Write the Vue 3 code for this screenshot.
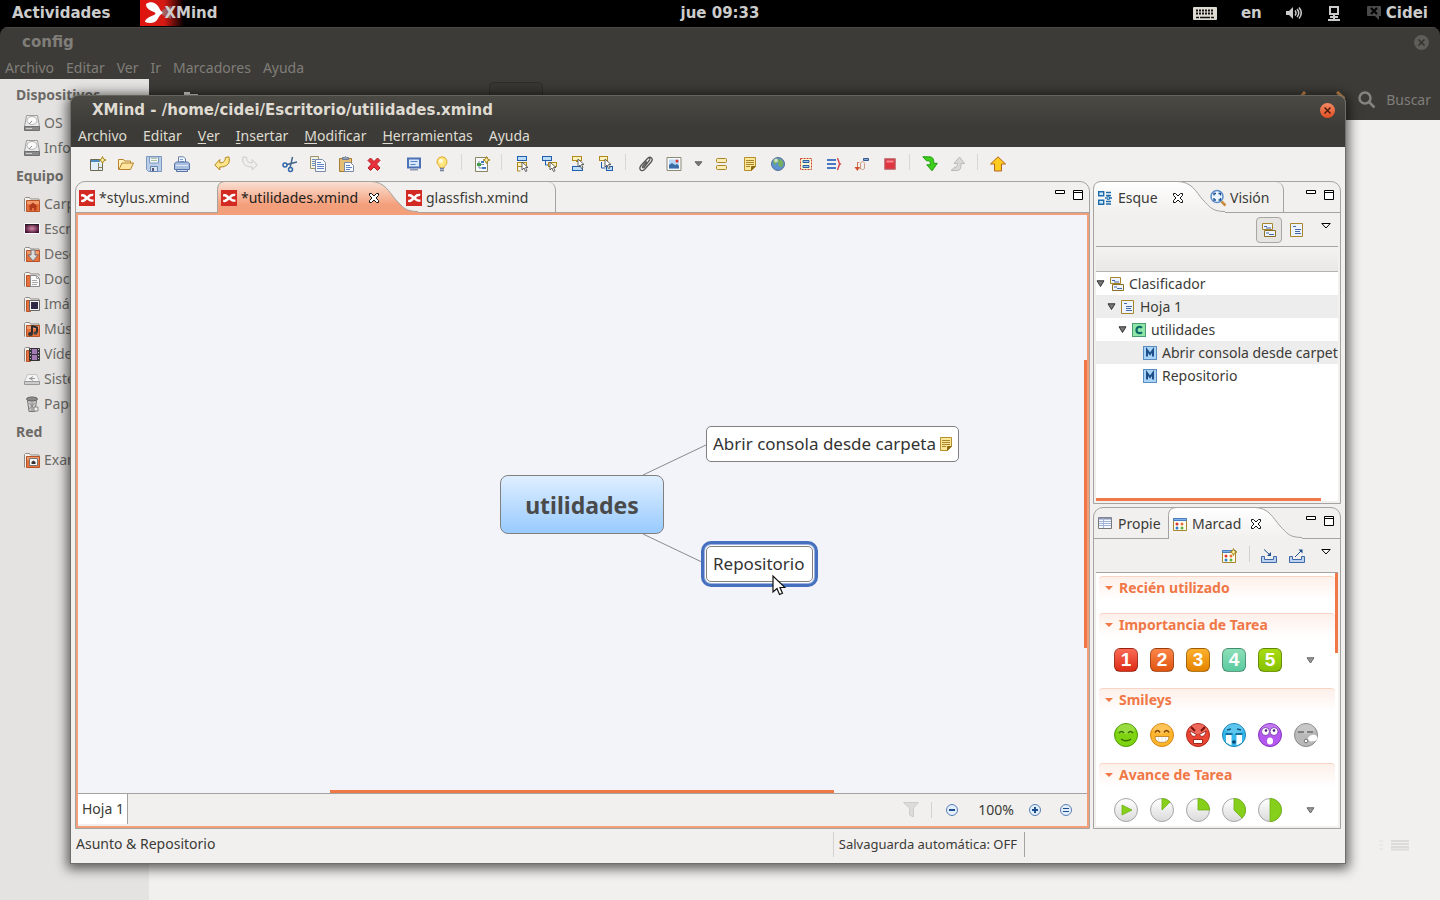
<script setup>
const fileMenus = ['Archivo', 'Editar', 'Ver', 'Ir', 'Marcadores', 'Ayuda']

const places = [
  { title: 'Dispositivos', items: [['disk', 'OS'], ['disk', 'Info']] },
  {
    title: 'Equipo',
    items: [
      ['home', 'Carpeta personal'],
      ['desk', 'Escritorio'],
      ['down', 'Descargas'],
      ['docs', 'Documentos'],
      ['pics', 'Imágenes'],
      ['music', 'Música'],
      ['video', 'Vídeos'],
      ['drive', 'Sistema de archivos'],
      ['trash', 'Papelera'],
    ],
  },
  { title: 'Red', items: [['net', 'Examinar la red']] },
]

const menus = [
  ['', 'Archivo'],
  ['', 'Editar'],
  ['V', 'er'],
  ['I', 'nsertar'],
  ['M', 'odificar'],
  ['H', 'erramientas'],
  ['', 'Ayuda'],
]

const tools = [
  ['fnew', 'fopen', 'save', 'print'],
  ['undo', 'redo'],
  ['cut', 'copy', 'paste', 'del'],
  ['present', 'bulb'],
  ['|', 'newsheet'],
  ['|', 'topic', 'subtopic', 'topicbefore', 'parent'],
  ['|', 'clip', 'image', 'v', 'label', 'note', 'globe', 'boundary', 'summary', 'relation', 'stop'],
  ['|', 'drill', 'drillup'],
  ['|', 'upload'],
]

const folder =
  '<path d="M.5 15.500V2.500l1-1h4l1 1.500h8.500v2" fill="#f4f2ef" stroke="#8f8b86"/><path d="M2.500 4.500h13v11h-13z" fill="#e8703a" stroke="#b5532b"/><path d="M3 5h12v3H3z" fill="#f39a6c"/>'
const folder2 =
  '<path d="M.5 15.500V2.500l1-1h4l1 1.500h8.500v2" fill="#f4f2ef" stroke="#8f8b86"/><path d="M2.500 4.500h4v11h-4z" fill="#e8703a" stroke="#b5532b"/>'
const sheetLines = '<path d="M4 4.500h3M6 7.500h6M6 9.500h5M6 11.500h6" stroke="#4468a8"/>'
const spark = '<path d="M12.500.5l1 2.500 2.500 1-2.500 1-1 2.500-1-2.500-2.500-1 2.500-1z" fill="#fff3a8" stroke="#a8861c"/>'
const pointer = '<path d="M8 6v8l2-2 1.500 3.500 1.500-.7-1.500-3.300h2.500z" fill="#fff" stroke="#555" stroke-width=".9"/>'
const blueBox = (x, y, w = 9) =>
  `<rect x="${x + 0.5}" y="${y + 0.5}" width="${w}" height="4" fill="#bcdcf8" stroke="#1f5fae"/>`
const goldBox = (x, y, w = 9) =>
  `<rect x="${x + 0.5}" y="${y + 0.5}" width="${w}" height="4" fill="#fdf3bd" stroke="#b08a1e"/>`

const icons = {
  disk: '<path d="M2.500.5h11l2 11H.5z" fill="#eceaea" stroke="#9d9d9d"/><ellipse cx="8" cy="5.500" rx="5" ry="4" fill="#fafafa" stroke="#b5b5b5"/><path d="M5 9l3-3" stroke="#8a8a8a"/><path d="M.5 11.500h15v4H.5z" fill="#8a8a8a" stroke="#6f6f6f"/><path d="M2 13.500h6" stroke="#ccc"/>',
  home: folder + '<path d="M4.500 10.500L9 6.500l4.500 4H12.500v4h-2.500v-2.500H8v2.500H5.500v-4z" fill="#b03a1a"/>',
  desk: '<defs><radialGradient id="dk"><stop offset="0" stop-color="#d58aa6"/><stop offset="1" stop-color="#4a1436"/></radialGradient></defs><path d="M.5 2.500h15v10H.5z" fill="url(#dk)" stroke="#fff"/><path d="M1 3.500h14" stroke="#222"/>',
  down: folder + '<path d="M7 4h4v5h3l-5 6-5-6h3z" fill="#ddd" stroke="#777"/>',
  docs: folder2 + '<path d="M6.500 4.500h6l3 3v8h-9z" fill="#fafafa" stroke="#8a8a8a"/><path d="M8 9.500h5M8 11.500h6M8 13.500h5M12.500 4.500v3h3" stroke="#aaa" fill="none"/>',
  pics: folder2 + '<path d="M5.500 4.500h10v10h-10z" fill="#f6f6f6" stroke="#666"/><path d="M7 6h7v7H7z" fill="#2e2a45"/>',
  music: folder + '<path d="M8 4.500v8M8 5l5 1.500v5" stroke="#2d2d2d" stroke-width="2" fill="none"/><ellipse cx="6.500" cy="13" rx="2.500" ry="2" fill="#333"/><ellipse cx="11.500" cy="12" rx="2" ry="1.800" fill="#444"/>',
  video: folder2 + '<path d="M5.500 2.500h10v12h-10z" fill="#3a3340" stroke="#333"/><path d="M8 3h5v5H8zM8 9h5v5H8z" fill="#a27ab4"/><path d="M6.500 3v12M14.500 3v12" stroke="#bbb" stroke-dasharray="1 2"/>',
  drive: '<path d="M3.500 3.500h9l3 7H.5z" fill="#f4f4f4" stroke="#c4c4c4"/><path d="M5 7.500h6M9 5.500l-3 2 3 2" stroke="#999" fill="none"/><path d="M.5 10.500h15v3H.5z" fill="#ccc" stroke="#999"/>',
  trash: '<path d="M3.500 4.500h9l-1.500 11h-6z" fill="#c9c9c9" stroke="#777"/><ellipse cx="8" cy="3" rx="5.500" ry="2" fill="#8a8a8a" stroke="#666"/><path d="M5.500 7l5 6M10.500 7l-5 6M8 6v9" stroke="#8a8a8a"/><path d="M10 11h4v4h-4z" fill="#eee" stroke="#888"/>',
  net: folder + '<path d="M5.500 6.500h8v7h-8z" fill="#f6f6f6" stroke="#777"/><path d="M7.500 12v-2l2-1.500 2 1.500v2z" fill="#333"/>',
  xm: '<rect width="16" height="16" fill="#d22a22"/><path d="M2 4.500c2.500-1 4.500 0 6 2 2-2.500 4-3 6.500-2.500l-.5 2c-2 0-3 .8-4 2 1.500 1.300 3 1.800 4.500 1.500v2.300c-2.500.3-4.500-.5-6.500-2.300-2 2.300-3.500 3-6 2.500l.3-2.200c1.700 0 2.700-.7 3.700-1.800C5 6.700 3.500 6.200 2 6.500z" fill="#fff"/>',
  fnew: '<path d="M.5 3.500h12v11H.5z" fill="#e3f0fb" stroke="#6d6a50"/><path d="M1 4h9v2H1z" fill="#4b8cc4"/><path d="M8.500 7v7M8.500 11.500h4" stroke="#8a8560"/>' + spark,
  fopen: '<path d="M.5 13.500v-10h5l1 1.500h6v2" fill="#fff0bd" stroke="#b8812c"/><path d="M1 13.500l3-6.500h11.500l-3 6.500z" fill="#ffe6a0" stroke="#b8812c"/>',
  save: '<path d="M.5.5h15v15H2.500l-2-2z" fill="#b9cde6" stroke="#7c98c2"/><path d="M3.500 1h9v6h-9z" fill="#f3f7fc" stroke="#7c98c2"/><path d="M5 2.500h6M5 4.500h6" stroke="#aac49a"/><path d="M4.500 10.500h7v5h-7z" fill="#d9e4f2" stroke="#6685b3"/><path d="M6 12h2v3H6z" fill="#557"/>',
  print: '<path d="M4.500 7V.8h5l2 2V7" fill="#f5f9fe" stroke="#6a7fa6"/><path d="M6 3.500h3M6 5.500h4" stroke="#6fa0d8"/><path d="M.5 7.500l2-1.500h11l2 1.500v6H.5z" fill="#a9bfe0" stroke="#5874a6"/><path d="M2 9.500h12" stroke="#dfe8f5"/><path d="M2.500 13.500h11v2h-11z" fill="#cddbf0" stroke="#5874a6"/>',
  undo: '<path d="M.8 9l5-5.500v3.300c4 .2 5.500-1.800 5.500-5.300l3.500-.7c2 6-1.500 10.400-9 10.200v3z" fill="#ffe68a" stroke="#b0851e"/>',
  redo: '<path d="M15.200 9l-5-5.500v3.300c-4 .2-5.500-1.800-5.500-5.300L1.200.8c-2 6 1.500 10.400 9 10.200v3z" fill="#efeeec" stroke="#cdcbc8"/>',
  cut: '<path d="M5 8.500L15 6M8 12L10.500 1" stroke="#44678e" stroke-width="1.500"/><circle cx="3" cy="9" r="2" fill="none" stroke="#2f67aa" stroke-width="1.500"/><circle cx="8.500" cy="13.500" r="2" fill="none" stroke="#2f67aa" stroke-width="1.500"/>',
  copy: '<path d="M.5.5h8v12h-8z" fill="#f4f1de" stroke="#9a9270"/><path d="M2 3.500h3M2 5.500h3M2 7.500h3M2 9.500h3" stroke="#6b8fc9"/><path d="M5.500 3.500h7l3 3v9h-10z" fill="#fbfcff" stroke="#7d8aa5"/><path d="M7 6.500h4M7 8.500h7M7 10.500h7M7 12.500h7" stroke="#5d84c5"/>',
  paste: '<path d="M1.500 2.500h12v13h-12z" fill="#e4be73" stroke="#a67d35"/><path d="M4.500 3.500v-2h2l1-1 1 1h2v2z" fill="#9aa4b5" stroke="#6b7a92"/><path d="M6.500 6.500h6l3 3v6h-9z" fill="#f8fbff" stroke="#7d8aa5"/><path d="M8 9.500h4M8 11.500h6M8 13.500h4" stroke="#5d84c5"/>',
  del: '<path d="M2 4.500L4.500 2l3.500 3.500L11.500 2 14 4.500 10.500 8l3.500 4-2.500 2.500L8 11l-3.500 3.500L2 12l3.500-4z" fill="#e8303a" stroke="#b5202a"/>',
  present: '<path d="M2 2.500h12v9H2z" fill="#d8e9fb" stroke="#4c72b5" stroke-width="2"/><path d="M4.500 5.500h7M4.500 8.500h5" stroke="#5d84c5"/><path d="M4 13h8v1.500H4z" fill="#8e98b0"/>',
  bulb: '<path d="M8 .8a5 5 0 0 1 3 9c-.8.800-1 1.200-1 2.200H6c0-1-.2-1.400-1-2.200a5 5 0 0 1 3-9z" fill="#ffe680" stroke="#e0a92a"/><circle cx="7" cy="5" r="2" fill="#fffbe0"/><path d="M6 12.500h4M6 14.500h4" stroke="#6f7f9f" stroke-width="1.500"/>',
  newsheet: '<path d="M1.500 1.500h12v14h-12z" fill="#f4faff" stroke="#8a8560"/><path d="M5 5v7h5M5 8.500h5" stroke="#7d8aa5" fill="none"/><path d="M3 7h4v3H3z" fill="#43a047"/><path d="M8 11h4v2H8zM7 5h3v2H7z" fill="#3f78c0"/>' + spark,
  topic: blueBox(3, 0) + goldBox(3, 6, 9) + '<path d="M3.500 11v4h3" stroke="#b08a1e" fill="none"/>' + pointer,
  subtopic: blueBox(0, 0) + '<path d="M3.500 5v4h3" stroke="#1f5fae" fill="none"/>' + goldBox(6, 6, 8) + pointer,
  topicbefore: goldBox(2, 0) + blueBox(2, 10, 10) + '<path d="M6 5.500h4v4" stroke="#b08a1e" fill="none"/><path d="M8 3v8l2-2 1.500 3.500 1.500-.7-1.500-3.300h2.500z" fill="#fff" stroke="#555" stroke-width=".9"/>',
  parent: goldBox(1, 0, 8) + '<path d="M3.500 6v6h4" stroke="#1f5fae" fill="none"/>' + blueBox(8, 10, 6) + '<path d="M7 3v8l2-2 1.500 3.500 1.500-.7-1.500-3.300h2.500z" fill="#fff" stroke="#555" stroke-width=".9"/>',
  clip: '<path d="M3.500 9l6-6.500c1-1.300 3-.3 2.200 1.300L6 11.500c-.8.700-2 0-1.300-1l4-5M3.500 9c-3.500 4-.5 7.500 3 4.500l7-8c2-3-1-5.500-3.500-3.500" fill="none" stroke="#555" stroke-width="1.300"/>',
  image: '<path d="M1 1.500h14v13H1z" fill="#fafafa" stroke="#8a8a7a"/><path d="M3 3.500h10v9H3z" fill="#b9d8f6"/><path d="M3 12.500V9l3-2 3 2 2-1 2 2v2.500z" fill="#3b6da8"/><circle cx="11" cy="5" r="1.500" fill="#d33"/>',
  label: '<rect x="2.500" y="2.500" width="10" height="4" rx="1" fill="#fbeeb5" stroke="#a8842a"/><rect x="2.500" y="9.500" width="10" height="4" rx="1" fill="#fbeeb5" stroke="#a8842a"/>',
  note: '<path d="M2.500 1.500h11v9l-4 4h-7z" fill="#fbe79a" stroke="#b5902a"/><path d="M4 4.500h8M4 6.500h8M4 8.500h8M4 10.500h4" stroke="#a8842a"/><path d="M9.500 14.500v-4h4" fill="#8f6a12" stroke="#8f6a12"/>',
  globe: '<circle cx="8" cy="8" r="6.500" fill="#5d92cf" stroke="#5a6f96"/><path d="M3 5c2-3 5-3 5-1s-1 2-2 4-2 1-3-3zM9 3c3 0 5 3 4 6-1 2-3 3-4 1s-2-5 0-7z" fill="#76ad5e"/><circle cx="6" cy="4.500" r="2" fill="#fff" opacity=".6"/>',
  boundary: '<path d="M2.500 2.500h11v11h-11z" fill="#fcf5cf" stroke="#c8402e" stroke-dasharray="2 1"/><path d="M5 4.500h6v2H5zM5 9.500h6v2H5z" fill="#9cc3ef" stroke="#2c5f9e"/>',
  summary: '<path d="M1 4h9M1 8h9M1 12h9" stroke="#4778c4" stroke-width="2"/><path d="M11 2.500c2 0 1 4.500 3 5.500-2 1-1 5.500-3 5.500" stroke="#d2434b" fill="none" stroke-width="1.500"/>',
  relation: '<path d="M3.500 12V6.500h2M7 12c-1 2-2 0-2-1M6.500 12.500V8c0-3 4-3 4-.5V12c0 2-4 2-4 0" stroke="#cf9a84" fill="none"/><path d="M3.500 6v6" stroke="#c9714f"/><path d="M.5 11l2.800 4 2.700-4z" fill="#d0512d"/><path d="M9.500 2.500h5v2h-5z" fill="#7fa6d6" stroke="#35598f"/>',
  stop: '<path d="M3 3h10v10H3z" fill="#e23340" stroke="#c05058" stroke-width="1.500"/><path d="M4.500 4.500h7v2h-7z" fill="#f48a92"/>',
  drill: '<path d="M.8.800h6c4 0 5 2 5 6.500h3.500L10 14.800 4.800 8.800h3.500c0-3.500-.5-4-3-4H4.500z" fill="#3ecf1c" stroke="#1f9a10"/>',
  drillup: '<path d="M1 14.500h5.500c4 0 4.500-2 4.500-7h3.500L9.500 1 4 7.500h3.500c0 3-.5 3.500-2.500 3.500z" fill="#d9d8d5" stroke="#bab9b5"/>',
  upload: '<path d="M8 .8L15.500 8h-4v7h-7V8h-4z" fill="#ffcb1f" stroke="#b5651c"/>',
  outline: '<path d="M.7 1.700h5v4h-5zM.7 10.200h5v4h-5z" fill="#cfeafc" stroke="#1d6bab" stroke-width="1.400"/><path d="M8 2.500h5M8 5.500h5M7 8h1.500M12 8h2M8 11.500h5M8 14h5" stroke="#1d6bab" stroke-width="1.300"/><path d="M9 6.800h2.500v2.500H9z" fill="#cfeafc" stroke="#1d6bab"/>',
  lens: '<circle cx="7" cy="6.500" r="6" fill="#eaf5ff" stroke="#5b8cc8" stroke-width="1.500"/><path d="M4 5.500v-2h2M8.500 3.500h2v2M10.500 8v2h-2M6 10H4V8" fill="none" stroke="#1d4f8f" stroke-width="1.300"/><path d="M11.500 11.500l4 4" stroke="#c98a3a" stroke-width="2.500"/>',
  sheets: '<path d="M1.500 1.500h10v6h-10z" fill="#eef4ff" stroke="#a8842a"/><path d="M3 4.500h3M5 6h5" stroke="#4468a8"/><path d="M3.500 8.500h11v6h-11z" fill="#eef4ff" stroke="#8a7020"/><path d="M5 11h3M8 12.500h5" stroke="#4468a8"/>',
  sheet: '<path d="M1.500 1.500h12v13h-12z" fill="#eef4ff" stroke="#a8842a"/>' + sheetLines,
  cent: '<rect x="1.500" y="1.500" width="13" height="13" fill="#8fe6a6" stroke="#4a9a72"/><path d="M11 5.800C9 4 5.500 4.600 5.500 8s3.500 4 5.500 2.200" fill="none" stroke="#0c6a6a" stroke-width="2.200"/>',
  main: '<rect x="1.500" y="1.500" width="13" height="13" fill="#a8d3f7" stroke="#5a8cc0"/><path d="M5 11.500V5l3 4 3-4v6.500" fill="none" stroke="#1d4f8a" stroke-width="2"/>',
  table: '<path d="M.5 1.500h13v11H.5z" fill="#f4f8ff" stroke="#777"/><path d="M.5 2.500h13" stroke="#8a94b5" stroke-width="2"/><path d="M1 5.500h12M1 7.500h12M1 9.500h12M5.500 2v10" stroke="#a3b3d6"/>',
  mark: '<path d="M1.500 2.500h13v12h-13z" fill="#fffdf2" stroke="#a8842a"/><path d="M1.500 2.500h13v2h-13z" fill="#7db3ea" stroke="#4c7cc0"/><circle cx="5" cy="8" r="1.500" fill="#d33"/><circle cx="10" cy="8" r="1.500" fill="#e8703a"/><circle cx="5" cy="12" r="1.500" fill="#2a7fd0"/><circle cx="10" cy="12" r="1.500" fill="#5db53a"/>',
  imp: '<path d="M.5 8.500h3v3h9v-3h3v6H.5z" fill="#bcd2ee" stroke="#3f68a8"/><path d="M3 1.500l5.500 5" stroke="#1d4f8f"/><path d="M10 8V4L6 8z" fill="#1d4f8f"/>',
  exp: '<path d="M.5 8.500h3v3h9v-3h3v6H.5z" fill="#bcd2ee" stroke="#3f68a8"/><path d="M6 9l6-6" stroke="#1d4f8f"/><path d="M9.500 1.500h4v4z" fill="#1d4f8f"/>',
  minus: '<circle cx="8" cy="8" r="5.500" fill="#e2eefb" stroke="#5a7fb5"/><path d="M5 8h6" stroke="#1d4f8f" stroke-width="2"/>',
  plus: '<circle cx="8" cy="8" r="5.500" fill="#e2eefb" stroke="#5a7fb5"/><path d="M5 8h6M8 5v6" stroke="#1d4f8f" stroke-width="2"/>',
  fit: '<circle cx="8" cy="8" r="5.500" fill="#e2eefb" stroke="#5a7fb5"/><path d="M5 6.500h6M5 9.500h6" stroke="#1d4f8f"/>',
  funnel: '<path d="M.5.5h15L10.500 6v9l-4-2V6z" fill="#dddbd8" stroke="#cfcdca"/>',
  close: '<path d="M3.500 3.500h2L8 6l2.500-2.500h2v2L10 8l2.500 2.500v2h-2L8 10l-2.500 2.500h-2v-2L6 8 3.500 5.500z" fill="#fff" stroke="#111"/>',
}
icons.newmark = icons.mark + spark

const tree = [
  { depth: 0, icon: 'sheets', text: 'Clasificador', open: true },
  { depth: 1, icon: 'sheet', text: 'Hoja 1', open: true },
  { depth: 2, icon: 'cent', text: 'utilidades', open: true },
  { depth: 3, icon: 'main', text: 'Abrir consola desde carpeta' },
  { depth: 3, icon: 'main', text: 'Repositorio' },
]

const priorities = ['red', 'orange', 'amber', 'teal', 'green']

const smileys = [
  ['#7fd411', '#4f9a08', '<path d="M5 10q2.500-3 5 0M14 10q2.500-3 5 0" stroke="#386b06" stroke-width="1.500" fill="none"/><path d="M7 16q5 3.500 10 0" stroke="#386b06" stroke-width="1.500" fill="none"/>'],
  ['#fdb52c', '#d68414', '<path d="M5 9.500q2.500-4 5 0M14 9.500q2.500-4 5 0" stroke="#8a4a06" stroke-width="1.500" fill="none"/><path d="M5 13.500h14q0 6-7 6t-7-6z" fill="#fff" stroke="#b5781c" stroke-width=".8"/><path d="M8.500 14v4.500M12 14v5.500M15.500 14v4.500" stroke="#ddd" stroke-width=".8"/>'],
  ['#ea4433', '#b02a1c', '<path d="M5 4l4 4M19 4l-4 4" stroke="#7a1008" stroke-width="2"/><path d="M4 8l6.500 3.500C9 14.500 5 14 4 8zM20 8l-6.500 3.500C15 14.500 19 14 20 8z" fill="#fff" stroke="#7a1008" stroke-width=".7"/><path d="M7.500 16.500h9v4h-9z" fill="#fff" stroke="#a02a1c"/>'],
  ['#35b8ec', '#1c85b8', '<path d="M4 12h5.500v10.500L4 19.500zM14.500 12H20v7.500l-5.500 3z" fill="#fff"/><path d="M3.500 11h7M13.500 11h7M5 7l4-1M19 7l-4-1" stroke="#0a5a85" stroke-width="1.500"/><ellipse cx="12" cy="19" rx="2" ry="1.800" fill="#0a4a75"/>'],
  ['#b458f0', '#8434bd', '<circle cx="7.500" cy="8.500" r="4" fill="#fff" stroke="#6f2aa5" stroke-width=".8"/><circle cx="16" cy="8.500" r="4" fill="#fff" stroke="#6f2aa5" stroke-width=".8"/><circle cx="8" cy="7.500" r="1.300" fill="#4a1a7a"/><circle cx="16" cy="7.500" r="1.300" fill="#4a1a7a"/><ellipse cx="12" cy="18" rx="3" ry="3.500" fill="#fff"/>'],
  ['#b9b9b9', '#8a8a8a', '<path d="M4 9h6M13 9h6" stroke="#6a6a6a" stroke-width="1.600"/><path d="M14 15c2-4 9-4 9-1 1 2-1 5-4 4-2 1-5 0-5-3z" fill="#fff"/><circle cx="12" cy="18" r="1.800" fill="#fff" stroke="#777"/>'],
]

const progress = [
  'M8 7v10l10-5z',
  'M12 12V.5A11.500 11.500 0 0 1 20.100 3.900z',
  'M12 12V.5A11.500 11.500 0 0 1 23.500 12z',
  'M12 12V.5A11.500 11.500 0 0 1 20.100 20.100z',
  'M12 12V.5A11.500 11.500 0 0 1 12 23.500z',
]

// Outline of a selected folder tab: rounded left corner, long S-curve on the right.
const tabPath = (w) =>
  `M.5 32V8.500Q.5.500 8.500.500H${w}C${w + 15} .5 ${w + 19} 11 ${w + 26} 19C${w + 33} 26 ${w + 35} 30.500 ${w + 48} 30.500`
</script>

<template>
  <div class="desktop">
    <header class="topbar">
      <div class="tb-left">
        <button class="tb-btn">Actividades</button>
        <button class="tb-app">
          <svg class="app-logo" width="44" height="26" viewBox="0 0 44 26">
            <defs>
              <linearGradient id="fade"><stop offset="0" stop-color="#e11410" /><stop offset=".55" stop-color="#d41a14" /><stop offset="1" stop-color="#d41a14" stop-opacity="0" /></linearGradient>
            </defs>
            <path d="M0 0h44v26H0z" fill="url(#fade)" />
            <path d="M6 4c4-3 9-2 12 2 2 3 2 5 6 7-4 1-5 4-7 7-2 3-7 4-12 2 0-3 4-5 9-7 2-1 2-2 0-3-5-2-8-4-8-8z" fill="#fff" />
            <path d="M22 10l9-4v13l-9-4z" fill="#8a8a8a" opacity=".6" />
          </svg>
          <span>XMind</span>
        </button>
      </div>
      <button class="tb-btn">jue 09:33</button>
      <div class="tb-right">
        <svg width="24" height="13" viewBox="0 0 24 13"><rect width="24" height="13" rx="1" fill="#dedbd2" /><path d="M3 3.500h18M3 6.500h18" stroke="#111" stroke-width="2" stroke-dasharray="2 1" /><path d="M3 10.500h3M7 10.500h10M18 10.500h3" stroke="#111" stroke-width="1.500" /></svg>
        <span class="tb-lang">en</span>
        <svg width="16" height="14" viewBox="0 0 16 14"><path d="M0 5h3l4-4v12L3 9H0z" fill="#ccc" /><path d="M9 4.500q2 2.500 0 5M11 3q3.500 4 0 8M13 1.500q4.500 5.500 0 11" fill="none" stroke="#ccc" stroke-width="1.500" /></svg>
        <svg class="tb-net" width="12" height="15" viewBox="0 0 12 15"><path d="M2 1h8v7H2z" fill="none" stroke="#ccc" stroke-width="2" /><path d="M6 9v5M2 11h8M0 14h12" stroke="#ccc" stroke-width="2" /></svg>
        <button class="tb-btn tb-user">
          <svg width="14" height="14" viewBox="0 0 14 14"><path d="M1 0h12q1 0 1 1v9h-2v4l-4-4H1q-1 0-1-1V1q0-1 1-1z" fill="#4a4a4a" /><path d="M4 2l6 6M10 2L4 8" stroke="#000" stroke-width="2" /></svg>
          Cidei
        </button>
      </div>
    </header>

    <section class="files">
      <div class="files-title">
        <span>config</span>
        <button class="f-close" aria-label="Cerrar"><svg width="7" height="7" viewBox="0 0 7 7"><path d="M.5.500l6 6M6.500.500l-6 6" stroke="#33322f" stroke-width="1.500" /></svg></button>
      </div>
      <nav class="files-menu"><button v-for="m in fileMenus" :key="m">{{ m }}</button></nav>
      <div class="files-body">
        <aside class="places">
          <template v-for="g in places" :key="g.title">
            <h2>{{ g.title }}</h2>
            <a v-for="[ic, name] in g.items" :key="name" href="#"><svg class="ic" viewBox="0 0 16 16" v-html="icons[ic]"></svg>{{ name }}</a>
          </template>
        </aside>
        <div class="files-main">
          <div class="files-bar">
            <svg class="path-folder" width="14" height="16" viewBox="0 0 14 16"><path d="M0 15V0h6v2h8v13z" fill="#d6d4d1" /></svg>
            <span class="path-now"></span>
            <svg class="nav-hint" width="46" height="12" viewBox="0 0 46 12"><path d="M0 8L6 1M38 1l8 7" stroke="#c8864a" stroke-width="3" /></svg>
            <svg width="18" height="18" viewBox="0 0 18 18"><circle cx="7" cy="7" r="5.500" fill="none" stroke="#85837e" stroke-width="2.500" /><path d="M11 11l5.500 5.500" stroke="#85837e" stroke-width="2.500" /></svg>
            <span class="search-word">Buscar</span>
          </div>
          <svg class="ghost" width="32" height="12" viewBox="0 0 32 12"><path d="M14 2h18M14 5h18M14 8h18M14 10.500h18" stroke="#dcdbda" stroke-width="2" /><path d="M2 2h4M2 6h4M2 10h4" stroke="#e2e1e0" /></svg>
        </div>
      </div>
    </section>

    <section class="win">
      <div class="win-head">
        <div class="win-title">
          <span>XMind - /home/cidei/Escritorio/utilidades.xmind</span>
          <button class="w-close" aria-label="Cerrar"><svg width="7" height="7" viewBox="0 0 7 7"><path d="M.5.500l6 6M6.500.500l-6 6" stroke="#4a1c0c" stroke-width="1.500" /></svg></button>
        </div>
        <nav class="win-menu"><button v-for="[u, m] in menus" :key="m"><u>{{ u }}</u>{{ m }}</button></nav>
      </div>

      <div class="toolbar">
        <div v-for="(g, i) in tools" :key="i" class="tgroup">
          <template v-for="t in g" :key="t">
            <i v-if="t === '|'" class="tsep"></i>
            <button v-else-if="t === 'v'" class="tdrop" aria-label="Más"><svg width="9" height="6" viewBox="0 0 9 6"><path d="M1 .8h7L4.500 5z" fill="#777" stroke="#666" /></svg></button>
            <button v-else class="tbtn" :aria-label="t"><svg class="ic" viewBox="0 0 16 16" v-html="icons[t]"></svg></button>
          </template>
        </div>
      </div>

      <div class="work">
        <main class="folder editor">
          <div class="tabs">
            <button class="tab t-stylus"><svg class="ic" viewBox="0 0 16 16" v-html="icons.xm"></svg>*stylus.xmind</button>
            <button class="tab t-active">
              <svg class="shape" width="204" height="32" viewBox="0 0 204 32">
                <defs><linearGradient id="og" x2="0" y2="1"><stop offset="0" stop-color="#fae0d4" /><stop offset=".75" stop-color="#f49f7b" /></linearGradient></defs>
                <path :d="tabPath(153) + 'V32z'" fill="url(#og)" /><path :d="tabPath(153)" fill="none" stroke="#a5a39f" />
              </svg>
              <svg class="ic" viewBox="0 0 16 16" v-html="icons.xm"></svg><span>*utilidades.xmind</span>
              <svg class="ic" viewBox="0 0 16 16" v-html="icons.close"></svg>
            </button>
            <button class="tab t-last t-glass"><svg class="ic" viewBox="0 0 16 16" v-html="icons.xm"></svg>glassfish.xmind</button>
            <div class="winctl">
              <button aria-label="Minimizar"><svg width="10" height="4" viewBox="0 0 10 4"><path d="M.5.500h9v3h-9z" fill="#fff" stroke="#000" /></svg></button>
              <button aria-label="Maximizar"><svg width="10" height="10" viewBox="0 0 10 10"><path d="M.5.500h9v9h-9zM.5 2.500h9" fill="#fff" stroke="#000" /></svg></button>
            </div>
          </div>
          <div class="frame">
            <div class="canvas">
              <svg class="links" width="800" height="500"><path d="M565 260l63-30M565 319l63 30" stroke="#8a8a8e" fill="none" /></svg>
              <div class="node root">utilidades</div>
              <div class="node n1">Abrir consola desde carpeta<svg class="ic" viewBox="0 0 16 16" v-html="icons.note"></svg></div>
              <div class="node n2">Repositorio</div>
              <svg class="cursor" width="14" height="21" viewBox="0 0 14 21"><path d="M1 1v16l4-3.500L7.500 19.500l3-1.300L8 12.500h5z" fill="#fff" stroke="#111" stroke-width="1.200" /></svg>
              <i class="vbar"></i><i class="hbar"></i>
            </div>
            <div class="sheetbar">
              <button class="sheet-tab">Hoja 1</button>
              <div class="zoom">
                <button aria-label="Filtro"><svg class="ic" viewBox="0 0 16 16" v-html="icons.funnel"></svg></button>
                <i></i>
                <button class="z-out" aria-label="Alejar"><svg class="ic" viewBox="0 0 16 16" v-html="icons.minus"></svg></button>
                <span>100%</span>
                <button class="z-in" aria-label="Acercar"><svg class="ic" viewBox="0 0 16 16" v-html="icons.plus"></svg></button>
                <button aria-label="Ajustar"><svg class="ic" viewBox="0 0 16 16" v-html="icons.fit"></svg></button>
              </div>
            </div>
          </div>
        </main>

        <div class="side">
          <section class="folder">
            <div class="tabs">
              <button class="tab t-esque">
                <svg class="shape" width="134" height="32" viewBox="0 0 134 32">
                  <defs><linearGradient id="wg" x2="0" y2="1"><stop offset="0" stop-color="#fff" /><stop offset="1" stop-color="#f1f0ee" /></linearGradient></defs>
                  <path :d="tabPath(84) + 'V32z'" fill="url(#wg)" /><path :d="tabPath(84)" fill="none" stroke="#a5a39f" />
                </svg>
                <svg class="ic" viewBox="0 0 16 16" v-html="icons.outline"></svg><span>Esque</span>
                <svg class="ic" viewBox="0 0 16 16" v-html="icons.close"></svg>
              </button>
              <button class="tab t-last t-vision"><svg class="ic" viewBox="0 0 16 16" v-html="icons.lens"></svg>Visión</button>
              <div class="winctl">
                <button aria-label="Minimizar"><svg width="10" height="4" viewBox="0 0 10 4"><path d="M.5.500h9v3h-9z" fill="#fff" stroke="#000" /></svg></button>
                <button aria-label="Maximizar"><svg width="10" height="10" viewBox="0 0 10 10"><path d="M.5.500h9v9h-9zM.5 2.500h9" fill="#fff" stroke="#000" /></svg></button>
              </div>
            </div>
            <div class="ptools">
              <button class="pressed" aria-label="Clasificador"><svg class="ic" viewBox="0 0 16 16" v-html="icons.sheets"></svg></button>
              <button aria-label="Hoja"><svg class="ic" viewBox="0 0 16 16" v-html="icons.sheet"></svg></button>
              <button class="pmenu" aria-label="Menú"><svg width="10" height="6" viewBox="0 0 10 6"><path d="M.8.500h8.400L5 5z" fill="#fff" stroke="#000" /></svg></button>
            </div>
            <div class="pbody">
              <div class="colhead"></div>
              <ul class="tree">
                <li v-for="n in tree" :key="n.text" :style="{ paddingLeft: n.depth * 11 + 'px' }">
                  <span class="twist"><svg v-if="n.open" width="9" height="8" viewBox="0 0 9 8"><path d="M1 .8h7L4.500 6.500z" fill="#777" stroke="#333" /></svg></span>
                  <svg class="ic" viewBox="0 0 16 16" v-html="icons[n.icon]"></svg>{{ n.text }}
                </li>
              </ul>
              <i class="tree-bar"></i>
            </div>
          </section>

          <section class="folder">
            <div class="tabs">
              <button class="tab t-propie"><svg class="ic" viewBox="0 0 16 16" v-html="icons.table"></svg>Propie</button>
              <button class="tab t-marcad">
                <svg class="shape" width="136" height="32" viewBox="0 0 136 32"><path :d="tabPath(86) + 'V32z'" fill="url(#wg)" /><path :d="tabPath(86)" fill="none" stroke="#a5a39f" /></svg>
                <svg class="ic" viewBox="0 0 16 16" v-html="icons.mark"></svg><span>Marcad</span>
                <svg class="ic" viewBox="0 0 16 16" v-html="icons.close"></svg>
              </button>
              <div class="winctl">
                <button aria-label="Minimizar"><svg width="10" height="4" viewBox="0 0 10 4"><path d="M.5.500h9v3h-9z" fill="#fff" stroke="#000" /></svg></button>
                <button aria-label="Maximizar"><svg width="10" height="10" viewBox="0 0 10 10"><path d="M.5.500h9v9h-9zM.5 2.500h9" fill="#fff" stroke="#000" /></svg></button>
              </div>
            </div>
            <div class="ptools">
              <button aria-label="Nuevo marcador"><svg class="ic" viewBox="0 0 16 16" v-html="icons.newmark"></svg></button>
              <i class="psep"></i>
              <button aria-label="Importar"><svg class="ic" viewBox="0 0 16 16" v-html="icons.imp"></svg></button>
              <button aria-label="Exportar"><svg class="ic" viewBox="0 0 16 16" v-html="icons.exp"></svg></button>
              <button class="pmenu" aria-label="Menú"><svg width="10" height="6" viewBox="0 0 10 6"><path d="M.8.500h8.400L5 5z" fill="#fff" stroke="#000" /></svg></button>
            </div>
            <div class="pbody marks">
              <button class="mhead">Recién utilizado</button>
              <div class="mrow mnone"></div>
              <button class="mhead">Importancia de Tarea</button>
              <div class="mrow">
                <button v-for="(p, i) in priorities" :key="p" class="prio" :class="p">{{ i + 1 }}</button>
                <button class="more" aria-label="Más"><svg width="9" height="7" viewBox="0 0 9 7"><path d="M1 .8h7L4.500 6z" fill="#999" stroke="#666" /></svg></button>
              </div>
              <button class="mhead">Smileys</button>
              <div class="mrow">
                <button v-for="([fill, edge, face], i) in smileys" :key="i" :aria-label="'Smiley ' + (i + 1)">
                  <svg width="24" height="24" viewBox="0 0 24 24"><circle cx="12" cy="12" r="11.500" :fill="fill" :stroke="edge" /><ellipse cx="12" cy="6" rx="9" ry="5" fill="#fff" opacity=".2" /><g v-html="face"></g></svg>
                </button>
              </div>
              <button class="mhead">Avance de Tarea</button>
              <div class="mrow">
                <button v-for="(d, i) in progress" :key="i" :aria-label="'Avance ' + (i + 1)">
                  <svg width="24" height="24" viewBox="0 0 24 24"><defs><linearGradient id="pg" x2="0" y2="1"><stop offset="0" stop-color="#fff" /><stop offset="1" stop-color="#dadada" /></linearGradient></defs><circle cx="12" cy="12" r="11.500" fill="url(#pg)" stroke="#a6a6a6" /><path :d="d" fill="#86d01c" stroke="#6cb010" stroke-width=".8" stroke-linejoin="round" /></svg>
                </button>
                <button class="more" aria-label="Más"><svg width="9" height="7" viewBox="0 0 9 7"><path d="M1 .8h7L4.500 6z" fill="#999" stroke="#666" /></svg></button>
              </div>
              <i class="marks-bar"></i>
            </div>
          </section>
        </div>
      </div>

      <footer class="status">
        <span>Asunto &amp; Repositorio</span>
        <span class="autosave">Salvaguarda automática: OFF</span>
      </footer>
    </section>
  </div>
</template>

<style>
body {
  margin: 0;
}
</style>

<style scoped>
* {
  box-sizing: border-box;
}
.desktop {
  position: relative;
  display: flex;
  flex-direction: column;
  height: 100vh;
  overflow: hidden;
  background: #000;
  color: #3c3b37;
  font: 14px/20px 'Noto Sans', 'Open Sans', sans-serif;
}
button {
  display: flex;
  align-items: center;
  margin: 0;
  padding: 0;
  border: 0;
  background: none;
  color: inherit;
  font: inherit;
  white-space: nowrap;
}
svg {
  display: block;
  flex: none;
}
i {
  display: block;
  flex: none;
}
.ic {
  width: 16px;
  height: 16px;
  overflow: visible;
}

/* top panel */
.topbar {
  display: grid;
  grid-template-columns: 1fr auto 1fr;
  height: 27px;
  padding: 0 12px;
  color: #ccc;
  font: bold 15px/26px 'DejaVu Sans', sans-serif;
}
.topbar .tb-btn,
.topbar .tb-app {
  height: 26px;
}
.tb-left,
.tb-right {
  display: flex;
  align-items: center;
  height: 26px;
}
.tb-right {
  justify-content: flex-end;
}
.tb-app {
  position: relative;
  margin-left: 54px;
}
.tb-app span {
  position: relative;
}
.app-logo {
  position: absolute;
  left: -24px;
  top: 0;
}
.tb-lang {
  margin: 0 24px;
}
.tb-net {
  margin: 0 27px 0 26px;
}
.tb-user {
  gap: 5px;
}

/* file manager */
.files {
  display: flex;
  flex: 1;
  flex-direction: column;
  overflow: hidden;
  border-radius: 8px 8px 0 0;
  background: #3c3b37;
  color: #807e79;
}
.files-title {
  display: flex;
  align-items: center;
  justify-content: space-between;
  height: 29px;
  padding: 0 11px 0 22px;
  border-top: 1px solid #4a4944;
  font: bold 15px/28px 'DejaVu Sans', sans-serif;
}
.f-close,
.w-close {
  justify-content: center;
  width: 15px;
  height: 15px;
  border-radius: 50%;
  background: #5f5d58;
}
.files-menu {
  display: flex;
  gap: 12px;
  height: 23px;
  padding: 0 5px;
}
.files-body {
  display: flex;
  flex: 1;
}
.places {
  width: 149px;
  overflow: hidden;
  background: #e4e3e1;
  color: #6c6a66;
}
.places h2 {
  margin: 0;
  padding-left: 16px;
  font-size: 14px;
  line-height: 31px;
}
.places a {
  display: flex;
  align-items: center;
  gap: 4px;
  height: 25px;
  padding-left: 24px;
  color: inherit;
  text-decoration: none;
  white-space: nowrap;
}
.files-main {
  display: flex;
  flex: 1;
  flex-direction: column;
  justify-content: space-between;
  background: #f1f0ee;
}
.files-bar {
  display: flex;
  align-items: center;
  height: 41px;
  padding-right: 9px;
  background: #3c3b37;
}
.path-folder {
  margin-left: 35px;
}
.path-now {
  width: 54px;
  height: 35px;
  margin-left: 291px;
  border: 1px solid #2e2d2a;
  border-radius: 4px;
  background: #383733;
}
.nav-hint {
  align-self: flex-start;
  margin: 12px 13px 0 auto;
}
.search-word {
  margin-left: 10px;
}
.ghost {
  align-self: flex-end;
  margin: 0 31px 49px 0;
}

/* application window */
.win {
  position: absolute;
  top: 95px;
  right: 94px;
  bottom: 36px;
  left: 70px;
  display: flex;
  flex-direction: column;
  border: 1px solid #6f6e6a;
  border-top: 0;
  border-radius: 8px 8px 0 0;
  background: #f1f0ee;
  box-shadow: 0 2px 12px 3px rgba(0, 0, 0, 0.6);
}
.win-head {
  height: 52px;
  border-top: 1px solid #64635c;
  border-radius: 7px 7px 0 0;
  background: linear-gradient(#4b4a44, #3c3b37 60%);
  color: #dfdbd2;
}
.win-title {
  display: flex;
  align-items: center;
  justify-content: space-between;
  height: 28px;
  padding: 0 10px 0 21px;
  font: bold 15px/26px 'DejaVu Sans', sans-serif;
}
.w-close {
  background: linear-gradient(#f68a63, #e04e22);
}
.win-menu {
  display: flex;
  gap: 16px;
  padding-left: 7px;
  line-height: 23px;
}
.win-menu u {
  text-underline-offset: 2px;
}
.toolbar {
  display: flex;
  gap: 12px;
  height: 34px;
  padding-left: 13px;
}
.tgroup {
  display: flex;
  align-items: center;
}
.tbtn {
  justify-content: center;
  width: 28px;
  height: 28px;
}
.tdrop {
  justify-content: center;
  width: 20px;
  height: 28px;
}
.tsep {
  width: 1px;
  height: 16px;
  margin: 0 6px 4px -7px;
  background: #d9d7d4;
}
.work {
  display: flex;
  flex: 1;
  gap: 3px;
  min-height: 0;
  padding: 0 4px;
}
.folder {
  display: flex;
  flex-direction: column;
  min-width: 0;
  min-height: 0;
  border: 1px solid #a5a39f;
  border-radius: 10px 10px 0 0;
}
.editor {
  flex: 1;
}
.tabs {
  display: flex;
  flex: none;
  height: 31px;
  box-shadow: inset 0 -1px #a5a39f;
}
.tab {
  position: relative;
  gap: 4px;
  height: 31px;
  padding-left: 4px;
}
.tab > * {
  position: relative;
}
.tab span {
  margin-right: auto;
}
.tab .shape {
  position: absolute;
  top: -1px;
  left: 0;
  z-index: -1;
}
.t-active,
.t-esque,
.t-marcad {
  z-index: 0;
}
.t-stylus {
  width: 141px;
  padding-left: 3px;
}
.t-active {
  width: 185px;
  padding-right: 20px;
  color: #1d1c1a;
}
.t-last {
  border-right: 1px solid #a5a39f;
  border-radius: 0 8px 0 0;
}
.t-glass {
  width: 154px;
}
.winctl {
  display: flex;
  align-items: flex-start;
  gap: 8px;
  margin-left: auto;
  padding: 8px 6px 0 0;
}
.t-esque {
  width: 113px;
  padding-right: 21px;
}
.t-esque .shape {
  left: -1px;
}
.t-vision {
  width: 77px;
  padding-left: 3px;
}
.t-propie {
  width: 74px;
  padding-left: 4px;
}
.t-marcad {
  width: 120px;
  padding-right: 24px;
}
.frame {
  display: flex;
  flex: 1;
  flex-direction: column;
  border: 2px solid #f49f7b;
}
.canvas {
  position: relative;
  flex: 1;
  overflow: hidden;
  background: #f3f4fa;
}
.links {
  position: absolute;
  top: 0;
  left: 0;
}
.node {
  position: absolute;
  left: 628px;
  display: flex;
  align-items: center;
  height: 36px;
  padding: 0 6px;
  border: 1px solid #808080;
  border-radius: 5px;
  background: #fff;
  color: #333;
  font-size: 17px;
  white-space: nowrap;
}
.root {
  top: 260px;
  left: 422px;
  justify-content: center;
  width: 164px;
  height: 59px;
  border-radius: 8px;
  background: linear-gradient(#dfeeff, #98cbff);
  color: #4a4a4a;
  font-size: 23px;
  font-weight: bold;
}
.n1 {
  top: 211px;
  justify-content: space-between;
  width: 253px;
  padding-right: 4px;
}
.n2 {
  top: 331px;
  width: 107px;
  box-shadow: 0 0 0 1px #fff, 0 0 0 2px #9bb3df, 0 0 0 5px #466fbe;
}
.cursor {
  position: absolute;
  top: 360px;
  left: 694px;
}
.vbar,
.hbar {
  position: absolute;
  background: #f07746;
}
.vbar {
  top: 145px;
  right: 0;
  width: 3px;
  height: 288px;
}
.hbar {
  bottom: 0;
  left: 252px;
  width: 504px;
  height: 3px;
}
.sheetbar {
  display: flex;
  justify-content: space-between;
  height: 33px;
  border-top: 1px solid #a5a39f;
}
.sheet-tab {
  height: 30px;
  padding: 0 3px 0 4px;
  border-right: 1px solid #a5a39f;
  background: #fff;
}
.zoom {
  display: flex;
  align-items: center;
  padding-right: 13px;
}
.zoom i {
  width: 1px;
  height: 16px;
  margin: 0 12px;
  background: #d4d2cf;
}
.z-out {
  margin-right: 18px;
}
.z-in {
  margin: 0 15px 0 13px;
}
.side {
  display: grid;
  grid-template-rows: 1fr 322px;
  gap: 3px;
  width: 248px;
}
.ptools {
  display: flex;
  align-items: center;
  justify-content: flex-end;
  gap: 2px;
  height: 33px;
  padding-right: 9px;
}
.ptools button {
  justify-content: center;
  width: 26px;
  height: 26px;
}
.ptools .pressed {
  border: 1px solid #a9a7a3;
  border-radius: 4px;
  background: #e6e4e1;
}
.ptools .pmenu {
  width: 10px;
  height: 16px;
  margin: 0 0 8px 9px;
}
.psep {
  width: 1px;
  height: 16px;
  margin: 0 4px 4px 5px;
  background: #d4d2cf;
}
.pbody {
  position: relative;
  flex: 1;
  min-height: 0;
  margin: 0 2px 2px;
  overflow: hidden;
  border-top: 1px solid #a5a39f;
  background: #fff;
}
.colhead {
  height: 25px;
  border-bottom: 1px solid #b5b3b0;
  background: linear-gradient(#f4f3f2, #e9e8e6);
}
.tree {
  margin: 0;
  padding: 0;
  list-style: none;
}
.tree li {
  display: flex;
  align-items: center;
  gap: 4px;
  height: 23px;
  overflow: hidden;
  white-space: nowrap;
}
.tree li:nth-child(even) {
  background: #ededed;
}
.twist {
  flex: none;
  width: 9px;
}
.tree-bar {
  position: absolute;
  bottom: 0;
  left: 0;
  width: 225px;
  height: 3px;
  background: #f07746;
}
.marks {
  padding: 3px 3px 0;
}
.mhead {
  width: 100%;
  height: 24px;
  gap: 6px;
  padding: 0 0 2px 6px;
  border: 1px solid #f9d3c4;
  border-width: 1px 0 0;
  border-radius: 4px 4px 0 0;
  background: linear-gradient(#fdf0ea, #fff);
  color: #f07746;
  font-weight: bold;
}
.mhead::before {
  border: 4px solid transparent;
  border-top-color: #f07746;
  border-bottom: 0;
  content: '';
}
.mrow {
  display: flex;
  align-items: center;
  gap: 12px;
  height: 51px;
  padding: 0 0 5px 15px;
}
.mnone {
  height: 13px;
}
.prio {
  justify-content: center;
  width: 24px;
  height: 24px;
  border: 1px solid rgba(0, 0, 0, 0.3);
  border-radius: 6px;
  color: #fff;
  font: bold 19px/22px 'Liberation Sans', sans-serif;
}
.red {
  background: linear-gradient(#fb6a55, #dd2c16);
}
.orange {
  background: linear-gradient(#fb8548, #e05510);
}
.amber {
  background: linear-gradient(#fbb02c, #e58300);
}
.teal {
  background: linear-gradient(#8ce0b8, #5bcaa0);
}
.green {
  background: linear-gradient(#a8dc14, #86c000);
}
.more {
  margin-left: 12px;
}
.marks-bar {
  position: absolute;
  top: 0;
  right: 0;
  width: 3px;
  height: 80px;
  background: #f07746;
}
.status {
  display: flex;
  justify-content: space-between;
  height: 34px;
  padding: 3px 320px 0 5px;
  line-height: 24px;
}
.autosave {
  height: 25px;
  padding: 0 7px 0 5px;
  border-right: 1px solid #a5a39f;
  border-left: 1px solid #d4d2cf;
  font-size: 13px;
}
</style>
